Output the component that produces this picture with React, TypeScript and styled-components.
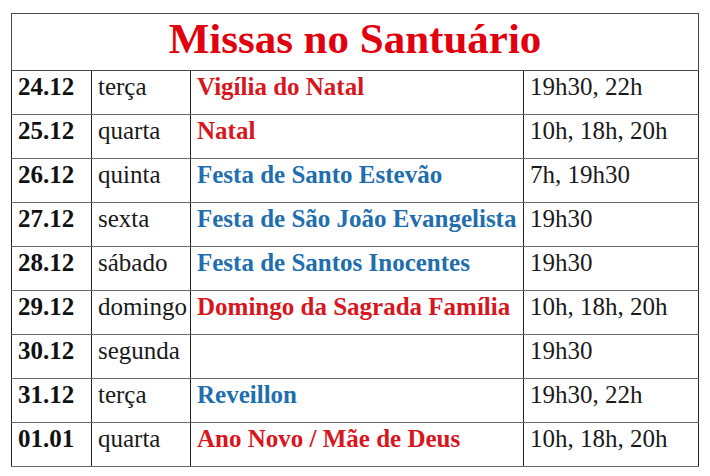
import * as React from 'react';
import styled, { createGlobalStyle } from 'styled-components';

const serif = `"Liberation Serif", "Times New Roman", Times, serif`;

const GlobalStyle = createGlobalStyle`
  html, body {
    margin: 0;
    padding: 0;
    background: #ffffff;
  }
  body {
    font-family: ${serif};
    color: #111111;
  }
`;

const Page = styled.div`
  width: 710px;
  height: 476px;
  padding: 13px 0 0 11px;
  box-sizing: border-box;
  background: #ffffff;
  font-family: ${serif};
`;

const Table = styled.table`
  width: 687px;
  table-layout: fixed;
  border-collapse: collapse;
  border: 1.5px solid #4a4a4a;
  font-family: ${serif};
`;

const Col = styled.col<{ $width: number }>`
  width: ${p => p.$width}px;
`;

const TitleCell = styled.th`
  height: 56px;
  padding: 0;
  vertical-align: top;
  font-family: ${serif};
  font-size: 43px;
  font-weight: bold;
  line-height: 49px;
  color: #e2000f;
  text-align: center;
  border: 1.5px solid #4a4a4a;
`;

const Cell = styled.td`
  height: 42px;
  padding: 1px 0 0 6px;
  vertical-align: top;
  font-family: ${serif};
  font-size: 25px;
  line-height: 29px;
  white-space: nowrap;
  overflow: hidden;
  border-top: 1.5px solid #6a6a6a;
  border-bottom: 1.5px solid #6a6a6a;
  border-left: 1.5px solid #222222;
  border-right: 1.5px solid #222222;
`;

const DateCell = styled(Cell)`
  font-weight: bold;
  color: #111111;
`;

const DayCell = styled(Cell)`
  color: #1a1a1a;
`;

const EventCell = styled(Cell)<{ $tone?: 'red' | 'blue' }>`
  font-weight: bold;
  color: ${p => (p.$tone === 'blue' ? '#1f6eae' : '#d8161d')};
`;

const TimeCell = styled(Cell)`
  color: #1a1a1a;
`;

interface Mass {
  date: string;
  day: string;
  event: string;
  tone?: 'red' | 'blue';
  times: string;
}

const masses: Mass[] = [
  { date: '24.12', day: 'terça', event: 'Vigília do Natal', tone: 'red', times: '19h30, 22h' },
  { date: '25.12', day: 'quarta', event: 'Natal', tone: 'red', times: '10h, 18h, 20h' },
  { date: '26.12', day: 'quinta', event: 'Festa de Santo Estevão', tone: 'blue', times: '7h, 19h30' },
  { date: '27.12', day: 'sexta', event: 'Festa de São João Evangelista', tone: 'blue', times: '19h30' },
  { date: '28.12', day: 'sábado', event: 'Festa de Santos Inocentes', tone: 'blue', times: '19h30' },
  { date: '29.12', day: 'domingo', event: 'Domingo da Sagrada Família', tone: 'red', times: '10h, 18h, 20h' },
  { date: '30.12', day: 'segunda', event: '', times: '19h30' },
  { date: '31.12', day: 'terça', event: 'Reveillon', tone: 'blue', times: '19h30, 22h' },
  { date: '01.01', day: 'quarta', event: 'Ano Novo / Mãe de Deus', tone: 'red', times: '10h, 18h, 20h' },
];

const App: React.FC = () => {
  return (
    <Page>
      <GlobalStyle />
      <Table>
        <colgroup>
          <Col $width={80} />
          <Col $width={99} />
          <Col $width={333} />
          <Col $width={175} />
        </colgroup>
        <thead>
          <tr>
            <TitleCell colSpan={4}>Missas no Santuário</TitleCell>
          </tr>
        </thead>
        <tbody>
          {masses.map(m => (
            <tr key={m.date}>
              <DateCell>{m.date}</DateCell>
              <DayCell>{m.day}</DayCell>
              <EventCell $tone={m.tone}>{m.event}</EventCell>
              <TimeCell>{m.times}</TimeCell>
            </tr>
          ))}
        </tbody>
      </Table>
    </Page>
  );
};

export default App;
